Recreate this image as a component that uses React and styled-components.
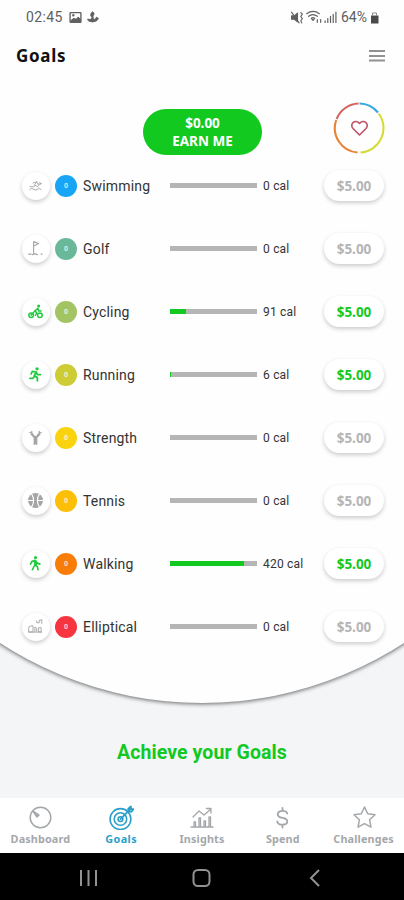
import styled, { createGlobalStyle } from 'styled-components'

const colors = {
  primary: '#12c91f',
  active: '#2b9fca',
  muted: '#a4a7aa',
  track: '#b5b5b5',
  background: '#f3f5f7',
}

const GlobalStyle = createGlobalStyle`
  * {
    box-sizing: border-box;
  }
  body {
    margin: 0;
    background: ${colors.background};
    font-family: Roboto, sans-serif;
  }
`

const Phone = styled.div`
  width: 404px;
  height: 900px;
  overflow: hidden;
  display: flex;
  flex-direction: column;
`
const Main = styled.main`
  flex: 1;
  overflow: hidden;
`
// The sheet is wider than the screen, so its round bottom shows as a soft arc
const Sheet = styled.div`
  width: 740px;
  height: 703px;
  margin: 0 -168px;
  padding: 0 168px;
  background: #fefefe;
  border-radius: 0 0 370px 370px;
  box-shadow: 0 1px 4px rgba(0, 0, 0, 0.6);
`
const StatusBar = styled.div`
  height: 34px;
  padding: 0 24px 0 26px;
  display: flex;
  align-items: center;
  color: #606060;
  font-size: 14px;
`
const Time = styled.span`
  width: 43px;
  letter-spacing: 0.35px;
`
const StatusIcons = styled.div`
  flex: 1;
  display: flex;
  align-items: center;
  gap: 5px;
`
const Battery = styled.div`
  display: flex;
  align-items: center;
  gap: 2px;
`
const Percent = styled.span`
  width: 28px;
  margin-left: 2px;
  font-size: 14px;
`
const Header = styled.header`
  height: 43px;
  padding: 0 19px 0 16px;
  display: flex;
  align-items: center;
  justify-content: space-between;
`
const Title = styled.h1`
  margin: 0;
  font: bold 17px 'Noto Sans', sans-serif;
  letter-spacing: 0.7px;
  color: #111;
`
const Hero = styled.section`
  height: 77px;
  padding: 25px 19px 0 143px;
  display: flex;
  justify-content: space-between;
`
const EarnButton = styled.button`
  width: 119px;
  height: 46px;
  margin-top: 6.5px;
  padding: 0;
  border: none;
  border-radius: 23px;
  background: ${colors.primary};
  color: #fff;
  font: bold 13.5px/18px 'Noto Sans', sans-serif;
`
const GoalRow = styled.div`
  height: 63px;
  padding: 0 20px 0 21.5px;
  display: flex;
  align-items: center;
`
const IconCircle = styled.div`
  width: 28px;
  height: 28px;
  border-radius: 50%;
  background: #fff;
  box-shadow: 0 2px 4px rgba(0, 0, 0, 0.2);
  color: ${(props) => (props.$active ? '#1fca3c' : '#a5a5a5')};
  display: flex;
  align-items: center;
  justify-content: center;
`
const Count = styled.div`
  width: 22px;
  height: 22px;
  margin: 0 6px 0 5.5px;
  border-radius: 50%;
  background: ${(props) => props.$color};
  color: rgba(255, 255, 255, 0.75);
  font: bold 7px/22px 'Noto Sans', sans-serif;
  text-align: center;
`
const Name = styled.div`
  width: 86.5px;
  font-size: 14px;
  letter-spacing: 0.18px;
  color: #333;
  padding-top: 1px;
`
const Track = styled.div`
  width: 87.5px;
  height: 5px;
  background: ${colors.track};
`
const Fill = styled.div`
  height: 5px;
  background: ${colors.primary};
`
const Calories = styled.div`
  flex: 1;
  margin-left: 6px;
  padding-top: 1px;
  font-size: 12px;
  letter-spacing: 0.2px;
  color: #333;
`
const PriceButton = styled.button`
  width: 60px;
  height: 31px;
  padding: 0;
  border: none;
  border-radius: 16px;
  background: #fff;
  box-shadow: 0 2px 4px rgba(0, 0, 0, 0.2);
  font: bold 13.5px 'Noto Sans', sans-serif;
  color: ${(props) => (props.$active ? colors.primary : '#b5b5b5')};
`
const Slogan = styled.h2`
  margin: 38px 0 0;
  font-size: 19.5px;
  line-height: 24px;
  font-weight: 700;
  letter-spacing: 0.08px;
  text-align: center;
  color: ${colors.primary};
`
const TabBar = styled.nav`
  height: 55px;
  background: #fff;
  display: grid;
  grid-template-columns: repeat(5, 1fr);
`
const Tab = styled.div`
  display: flex;
  flex-direction: column;
  align-items: center;
  padding-top: 6px;
  color: ${(props) => (props.$active ? colors.active : colors.muted)};
`
const TabIcon = styled.div`
  height: 27px;
  padding-bottom: 1px;
  display: flex;
  align-items: center;
`
const TabLabel = styled.span`
  font: bold 10.8px/16px 'Noto Sans', sans-serif;
  letter-spacing: ${(props) => (props.$active ? 0.4 : 0.15)}px;
`
const SystemBar = styled.div`
  height: 47px;
  padding: 3px 84px 0 79px;
  background: #000;
  display: flex;
  align-items: center;
`
const SystemButton = styled.div`
  display: flex;
  margin-right: ${(props) => props.$gap}px;
`

function Svg({ size = 20, w = 1.5, children }) {
  return (
    <svg
      width={size}
      height={size}
      viewBox="0 0 24 24"
      fill="none"
      stroke="currentColor"
      strokeWidth={w}
      strokeLinecap="round"
      strokeLinejoin="round"
    >
      {children}
    </svg>
  )
}

// Small drawings inside the white circles
const sportIcons = {
  Swimming: (
    <>
      <path d="M3 18q3-2.500 6 0t6 0 6 0M3 14h6l3-2 4 2M8 8l6-2 3 6M14 6l-4 6" />
      <circle cx="19" cy="9" r="1.6" />
    </>
  ),
  Golf: (
    <>
      <path d="M9 21V1l8 3-8 4" strokeWidth="1.8" />
      <path d="M1 21h4M7 22q5-3 8 0M21 21h1.500" strokeWidth="1.8" />
    </>
  ),
  Cycling: (
    <g strokeWidth="2.4">
      <circle cx="5" cy="18" r="3.700" />
      <circle cx="19" cy="18" r="3.700" />
      <path d="M5 18l6-7 5-4 1 4h4M11 11l3 3-2 4" />
      <circle cx="17" cy="3" r="1.200" fill="currentColor" />
    </g>
  ),
  Running: (
    <g strokeWidth="2.800">
      <circle cx="14.500" cy="3" r="1.200" fill="currentColor" />
      <path d="M5 11l2-4 6 1-3 6 5 3v5M10 15l-2 3H3M13 8l2 4h5" />
    </g>
  ),
  Strength: (
    <path
      strokeWidth="2"
      d="M3 4l3 1 4 5 2 1 2-1 4-5 3-1M5 7l5 5v11M19 7l-5 5v11M12 12v10M6 2v3M18 2v3"
    />
  ),
  Tennis: (
    <>
      <circle cx="12" cy="12" r="12" fill="currentColor" stroke="none" />
      <path
        d="M5.500 1q7 11 0 22M18.500 1q-7 11 0 22M0 12h8M16 12h8"
        stroke="#fff"
        strokeWidth="1.800"
      />
    </>
  ),
  Walking: (
    <g strokeWidth="2.600">
      <circle cx="12" cy="2.500" r="1.200" fill="currentColor" />
      <path d="M4 13l2-4 5-2 3 4 5 2M11 7v7l-4 8M11 14l4 3 1 5M13 8v6" />
    </g>
  ),
  Elliptical: (
    <path d="M1 20v-5q0-4 4-4h3v9zM11 20v-7l3 2v5M17 20v-6h4v6zM1 21h21M14 3v3h4V2h3M22 1v6" />
  ),
}

const goals = [
  { name: 'Swimming', color: '#18a5f5', cal: 0, progress: 0 },
  { name: 'Golf', color: '#68b899', cal: 0, progress: 0 },
  { name: 'Cycling', color: '#a3c462', cal: 91, progress: 19 },
  { name: 'Running', color: '#cdcc35', cal: 6, progress: 1.2 },
  { name: 'Strength', color: '#f9d30e', cal: 0, progress: 0 },
  { name: 'Tennis', color: '#fdbe08', cal: 0, progress: 0 },
  { name: 'Walking', color: '#f87c08', cal: 420, progress: 85 },
  { name: 'Elliptical', color: '#f73540', cal: 0, progress: 0 },
]

const tabs = [
  {
    label: 'Dashboard',
    size: 24,
    icon: (
      <>
        <circle cx="12.500" cy="12.500" r="10.300" />
        <path d="M5 6l6 4-2 2z" fill="currentColor" />
      </>
    ),
  },
  {
    label: 'Goals',
    size: 25,
    icon: (
      <>
        <circle cx="11" cy="13.500" r="10" />
        <circle cx="11" cy="13.500" r="6" />
        <circle cx="11" cy="13.500" r="2.300" />
        <path
          d="M11 13.500L20 4.500M18.500 6V3.500L21 1.500v2.500h2.500l-2 2.500z"
          strokeWidth="1.800"
        />
      </>
    ),
  },
  {
    label: 'Insights',
    size: 24,
    icon: (
      <path
        strokeWidth="1.300"
        d="M1 22h22M4 21v-4h1.500v4M9 21v-8h1.500v8M14 21v-5h1.500v5M19 21v-9h1.500v9M3 12l6-6 5 4 7-6M16.500 3.500H21V8"
      />
    ),
  },
  {
    label: 'Spend',
    size: 23,
    icon: (
      <path
        strokeWidth="1.900"
        d="M17 8Q16.500 5 12 5T7 8.500q0 3 5 3.800t5 3.900q0 3.300-5 3.300T6.500 16M12 2v3M12 19.500V22.500"
      />
    ),
  },
  {
    label: 'Challenges',
    size: 24,
    icon: (
      <path d="M12.500 2l3.200 6.700 7.300 1-5.400 5.100 1.400 7.400-6.500-3.500L6 22.200l1.400-7.400L2 9.700l7.300-1z" />
    ),
  },
]

function HeartRing() {
  return (
    <svg width="52" height="52" viewBox="0 0 52 52" fill="none">
      <g strokeWidth="2.100">
        <path d="M3.600 17A24.500 24.500 0 0 1 25.500 1.500" stroke="#d4625f" />
        <path d="M26.500 1.500A24.500 24.500 0 0 1 45 10.500" stroke="#34a9df" />
        <path d="M45.700 11.500A24.500 24.500 0 0 1 27.500 50.500" stroke="#d5db37" />
        <path d="M24.500 50.500A24.500 24.500 0 0 1 3.200 18" stroke="#e98436" />
      </g>
      <path
        d="M26.500 33l-6.500-6.500C16 22 22.500 16.500 26.500 21.500c4-5 10.500.5 6.500 5z"
        stroke="#bd5265"
        strokeWidth="1.600"
        strokeLinejoin="round"
      />
    </svg>
  )
}

function App() {
  return (
    <Phone>
      <GlobalStyle />
      <Main>
        <Sheet>
          <StatusBar>
            <Time>02:45</Time>
            <StatusIcons>
              <Svg size={13} w={2.5}>
                <rect x="2" y="3" width="20" height="18" rx="1" />
                <path d="M4 18l5-4 4 2 4-4 4 4v3H4z" fill="currentColor" />
                <circle cx="8" cy="8" r="1" />
              </Svg>
              <Svg size={12} w={1.5}>
                <path
                  d="M11 2q4 0 3 5l-2 3 1 7 4-1 2-4 4 3-4 5q-8 4-16 0l-2-4 6 1 3-4-3-4q0-6 4-7z"
                  fill="currentColor"
                />
              </Svg>
            </StatusIcons>
            <Battery>
              <Svg size={13} w={2}>
                <path d="M1 9h5l6-5v16l-6-5H1z" fill="currentColor" />
                <path d="M1 2l14 20M18 3l3 3-3 4 3 4-3 4 2 4" />
              </Svg>
              <Svg size={16} w={1.8}>
                <path d="M1 7q10-7 19 0M4 11q6-5 13 0M8 14q3-2 5 0l-2.500 3zM17 20v-4M22 16v4" />
              </Svg>
              <Svg size={13} w={2.2}>
                <path d="M2 21v-3M7 21v-7M12 21V10M17 21V6M22 21V2" />
              </Svg>
              <Percent>64%</Percent>
              <svg width="9" height="13" viewBox="0 0 9 13" fill="#4a4a4a">
                <path d="M0 4.500h7.500v8H0z" />
                <path d="M1.500 4.500V2h4v2.500" fill="none" stroke="#888" />
              </svg>
            </Battery>
          </StatusBar>
          <Header>
            <Title>Goals</Title>
            <svg width="16" height="13" viewBox="0 0 16 13" stroke="#929292">
              <path d="M0 2h16M0 7h16M0 11.500h16" strokeWidth="1.800" />
            </svg>
          </Header>
          <Hero>
            <EarnButton>
              $0.00
              <br />
              EARN ME
            </EarnButton>
            <HeartRing />
          </Hero>
          {goals.map((goal) => (
            <GoalRow key={goal.name}>
              <IconCircle $active={goal.cal > 0}>
                <Svg size={15}>{sportIcons[goal.name]}</Svg>
              </IconCircle>
              <Count $color={goal.color}>0</Count>
              <Name>{goal.name}</Name>
              <Track>
                <Fill style={{ width: `${goal.progress}%` }} />
              </Track>
              <Calories>{goal.cal} cal</Calories>
              <PriceButton $active={goal.cal > 0}>$5.00</PriceButton>
            </GoalRow>
          ))}
        </Sheet>
        <Slogan>Achieve your Goals</Slogan>
      </Main>
      <TabBar>
        {tabs.map((tab) => (
          <Tab key={tab.label} $active={tab.label === 'Goals'}>
            <TabIcon>
              <Svg size={tab.size}>{tab.icon}</Svg>
            </TabIcon>
            <TabLabel $active={tab.label === 'Goals'}>{tab.label}</TabLabel>
          </Tab>
        ))}
      </TabBar>
      <SystemBar>
        <SystemButton $gap={94}>
          <svg width="19" height="18" viewBox="0 0 19 18" stroke="#929292">
            <path d="M2 1v16M9.500 1v16M17 1v16" strokeWidth="2" />
          </svg>
        </SystemButton>
        <SystemButton $gap={98}>
          <svg width="19" height="18" viewBox="0 0 19 18" fill="none">
            <rect
              x="1.500"
              y="1"
              width="16"
              height="16"
              rx="4.500"
              stroke="#929292"
              strokeWidth="2"
            />
          </svg>
        </SystemButton>
        <SystemButton $gap={0}>
          <svg width="11" height="18" viewBox="0 0 11 18" fill="none">
            <path d="M10 1L2 9l8 8" stroke="#929292" strokeWidth="2" />
          </svg>
        </SystemButton>
      </SystemBar>
    </Phone>
  )
}

export default App
